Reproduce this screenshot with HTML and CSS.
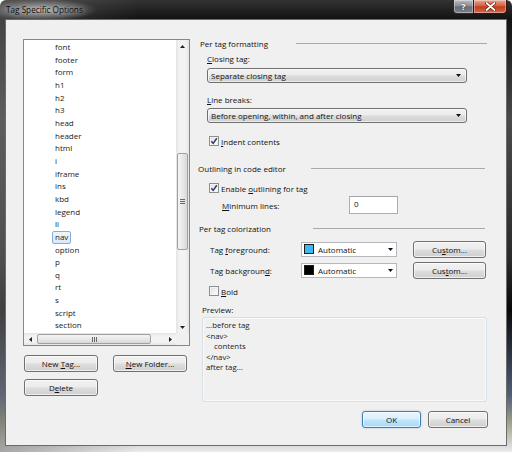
FILE: index.html
```html
<!DOCTYPE html>
<html>
<head>
<meta charset="utf-8">
<link rel="stylesheet" href="styles.css">
</head>
<body>
<div class="window">
  <div class="titlebar">
    <span class="title">Tag Specific Options</span>
    <div class="caps">
      <div class="cap cap-help"><span class="q">?</span></div>
      <div class="cap cap-close">
        <svg width="11" height="9" viewBox="0 0 11 9"><path d="M1.5 1 L9.5 8 M9.5 1 L1.5 8" stroke="#5a1a10" stroke-width="3.2" stroke-linecap="round"/><path d="M1.5 1 L9.5 8 M9.5 1 L1.5 8" stroke="#fff" stroke-width="1.8" stroke-linecap="round"/></svg>
      </div>
    </div>
  </div>
  <div class="client">
    <div class="left">
      <div class="listbox">
        <div class="list-main">
          <div class="items">
            <div class="item">font</div>
            <div class="item">footer</div>
            <div class="item">form</div>
            <div class="item">h1</div>
            <div class="item">h2</div>
            <div class="item">h3</div>
            <div class="item">head</div>
            <div class="item">header</div>
            <div class="item">html</div>
            <div class="item">i</div>
            <div class="item">iframe</div>
            <div class="item">ins</div>
            <div class="item">kbd</div>
            <div class="item">legend</div>
            <div class="item">li</div>
            <div class="item sel"><span>nav</span></div>
            <div class="item">option</div>
            <div class="item">p</div>
            <div class="item">q</div>
            <div class="item">rt</div>
            <div class="item">s</div>
            <div class="item">script</div>
            <div class="item">section</div>
          </div>
          <div class="vscroll">
            <div class="sb-arrow"><svg width="5" height="3" viewBox="0 0 5 3"><path d="M0 3 L2.5 0 L5 3 Z" fill="#222"/></svg></div>
            <div class="vs-before"></div>
            <div class="thumb-v"><svg width="5" height="5" viewBox="0 0 5 5"><path d="M0 0.5 H5 M0 2.5 H5 M0 4.5 H5" stroke="#6a6a6a" stroke-width="1"/></svg></div>
            <div class="vs-after"></div>
            <div class="sb-arrow"><svg width="5" height="3" viewBox="0 0 5 3"><path d="M0 0 L2.5 3 L5 0 Z" fill="#222"/></svg></div>
          </div>
        </div>
        <div class="hrow">
          <div class="hscroll">
            <div class="sb-arrow-h"><svg width="3" height="5" viewBox="0 0 3 5"><path d="M3 0 L0 2.5 L3 5 Z" fill="#222"/></svg></div>
            <div class="hs-before"></div>
            <div class="thumb-h"><svg width="5" height="5" viewBox="0 0 5 5"><path d="M0.5 0 V5 M2.5 0 V5 M4.5 0 V5" stroke="#6a6a6a" stroke-width="1"/></svg></div>
            <div class="hs-after"></div>
            <div class="sb-arrow-h"><svg width="3" height="5" viewBox="0 0 3 5"><path d="M0 0 L3 2.5 L0 5 Z" fill="#222"/></svg></div>
          </div>
          <div class="corner"></div>
        </div>
      </div>
      <div class="btn-row first">
        <div class="btn btn-left"><span>New <u>T</u>ag...</span></div>
        <div class="btn btn-left"><span><u>N</u>ew Folder...</span></div>
      </div>
      <div class="btn-row second">
        <div class="btn btn-left"><span>D<u>e</u>lete</span></div>
      </div>
    </div>

    <div class="right">
      <div class="sec sec1">
        <span class="sec-title">Per tag formatting</span>
        <span class="sec-line"></span>
      </div>
      <div class="lbl lbl-closing"><u>C</u>losing tag:</div>
      <div class="combo combo-first"><span>Separate closing tag</span><svg width="5" height="3" viewBox="0 0 5 3"><path d="M0 0 L2.5 3 L5 0 Z" fill="#111"/></svg></div>
      <div class="lbl lbl-lines"><u>L</u>ine breaks:</div>
      <div class="combo combo-second"><span>Before opening, within, and after closing</span><svg width="5" height="3" viewBox="0 0 5 3"><path d="M0 0 L2.5 3 L5 0 Z" fill="#111"/></svg></div>
      <div class="chk-row chk-indent">
        <span class="chk"><svg width="8" height="8" viewBox="0 0 8 8"><path d="M1.3 4.2 L3.2 6.4 L6.8 1.3" fill="none" stroke="#2f3b63" stroke-width="1.5"/></svg></span>
        <span class="chk-text"><u>I</u>ndent contents</span>
      </div>

      <div class="sec sec2">
        <span class="sec-title">Outlining in code editor</span>
        <span class="sec-line"></span>
      </div>
      <div class="chk-row chk-outline">
        <span class="chk"><svg width="8" height="8" viewBox="0 0 8 8"><path d="M1.3 4.2 L3.2 6.4 L6.8 1.3" fill="none" stroke="#2f3b63" stroke-width="1.5"/></svg></span>
        <span class="chk-text">Enable <u>o</u>utlining for tag</span>
      </div>
      <div class="min-row">
        <span class="min-label"><u>M</u>inimum lines:</span>
        <span class="textbox">0</span>
      </div>

      <div class="sec sec3">
        <span class="sec-title">Per tag colorization</span>
        <span class="sec-line"></span>
      </div>
      <div class="color-row fg-row">
        <span class="color-label">Tag <u>f</u>oreground:</span>
        <div class="color-combo"><span class="swatch swatch-blue"></span><span class="color-text">Automatic</span><svg width="5" height="3" viewBox="0 0 5 3"><path d="M0 0 L2.5 3 L5 0 Z" fill="#111"/></svg></div>
        <div class="btn btn-custom"><span>Cu<u>s</u>tom...</span></div>
      </div>
      <div class="color-row bg-row">
        <span class="color-label">Tag backgroun<u>d</u>:</span>
        <div class="color-combo"><span class="swatch swatch-black"></span><span class="color-text">Automatic</span><svg width="5" height="3" viewBox="0 0 5 3"><path d="M0 0 L2.5 3 L5 0 Z" fill="#111"/></svg></div>
        <div class="btn btn-custom"><span>Cus<u>t</u>om...</span></div>
      </div>
      <div class="chk-row chk-bold">
        <span class="chk"></span>
        <span class="chk-text"><u>B</u>old</span>
      </div>

      <div class="lbl lbl-preview">Preview:</div>
      <div class="preview">
        <div>...before tag</div>
        <div>&lt;nav&gt;</div>
        <div class="indent">contents</div>
        <div>&lt;/nav&gt;</div>
        <div>after tag...</div>
      </div>

      <div class="dlg-buttons">
        <div class="btn btn-ok"><span>OK</span></div>
        <div class="btn btn-cancel"><span>Cancel</span></div>
      </div>
    </div>
  </div>
</div>
</body>
</html>
```

FILE: styles.css
```css
html, body {
  margin: 0;
  padding: 0;
}

body {
  width: 512px;
  height: 452px;
  overflow: hidden;
  background: #ffffff;
  font-family: "Open Sans", "Noto Sans", sans-serif;
  font-size: 8px;
  color: #111111;
}

u {
  text-decoration-thickness: 1px;
  text-underline-offset: 1px;
}

.window {
  width: 512px;
  height: 452px;
  display: flex;
  flex-direction: column;
  box-sizing: border-box;
  border-radius: 6px 6px 0 0;
  background:
    radial-gradient(ellipse 55px 11px at 42px 10px, rgba(205, 205, 205, 0.8), rgba(205, 205, 205, 0) 100%),
    linear-gradient(to right, rgba(110, 110, 110, 0.55) 0, rgba(0, 0, 0, 0) 140px),
    linear-gradient(to bottom, #333333 0, #121212 19px, #4a4a4a 120px, #2a2a2a 260px, #090909 310px, #4e5d7a 395px, #a8a68e 425px, #d8d8d8 445px, #ececec 452px);
}

/* ---------- title bar ---------- */
.titlebar {
  height: 19px;
  flex: none;
  display: flex;
  align-items: flex-start;
}

.title {
  padding-left: 6px;
  line-height: 20px;
  font-size: 8.2px;
  color: #0a0a0a;
  text-shadow: 0 0 5px rgba(255, 255, 255, 0.7);
}

.caps {
  margin-left: auto;
  margin-right: 5px;
  display: flex;
  height: 14px;
}

.cap {
  box-sizing: border-box;
  height: 14px;
  display: flex;
  align-items: center;
  justify-content: center;
  border: 1px solid #2e2e2e;
  border-top: none;
  box-shadow: inset 0 0 0 1px rgba(255, 255, 255, 0.35);
}

.cap-help {
  width: 20px;
  border-right: none;
  border-radius: 0 0 0 4px;
  background: linear-gradient(#b9bcc2, #8c9098 45%, #6a6e76 52%, #7c8088 100%);
}

.q {
  color: #ffffff;
  font-weight: bold;
  font-size: 9px;
  line-height: 10px;
  text-shadow: 0 0 2px #222;
}

.cap-close {
  width: 34px;
  border-color: #3a140c;
  border-radius: 0 0 4px 0;
  background: linear-gradient(#e9a897, #d4613f 45%, #c23c1f 52%, #d26a4c 100%);
}

/* ---------- client area ---------- */
.client {
  flex: none;
  height: 427px;
  box-sizing: border-box;
  margin: 0 5px;
  border: 1px solid #6b6b6b;
  background: #f0f0f0;
  display: flex;
  padding: 17px 0 0 17px;
}

.left {
  width: 167px;
  margin-top: 2px;
  display: flex;
  flex-direction: column;
}

.listbox {
  box-sizing: border-box;
  width: 167px;
  height: 307px;
  border: 1px solid #828790;
  background: #ffffff;
  display: flex;
  flex-direction: column;
}

.list-main {
  flex: 1;
  display: flex;
  min-height: 0;
}

.items {
  flex: 1;
  overflow: hidden;
  padding-top: 1px;
  color: #1a1a1a;
}

.item {
  height: 12.67px;
  line-height: 12.67px;
  padding-left: 31px;
  white-space: nowrap;
}

.item.sel span {
  display: inline-block;
  box-sizing: border-box;
  height: 12.67px;
  line-height: 10.67px;
  vertical-align: top;
  margin-left: -3px;
  padding: 0 2px;
  border: 1px solid #84acdd;
  border-radius: 2px;
  background: linear-gradient(#eef5fd, #dbe9fa);
}

.vscroll {
  width: 13px;
  flex: none;
  display: flex;
  flex-direction: column;
  background: linear-gradient(to right, #e4e4e4, #f2f2f2 25%, #f2f2f2 75%, #e4e4e4);
}

.sb-arrow {
  height: 12px;
  flex: none;
  display: flex;
  align-items: center;
  justify-content: center;
}

.vs-before {
  height: 101px;
  flex: none;
}

.thumb-v {
  height: 97px;
  flex: none;
  box-sizing: border-box;
  margin: 0 1px;
  border: 1px solid #a0a0a0;
  border-radius: 2px;
  background: linear-gradient(to right, #f4f4f4, #e8e8e8 50%, #d8d8d8);
  display: flex;
  align-items: center;
  justify-content: center;
}

.vs-after {
  flex: 1;
}

.hrow {
  height: 12px;
  flex: none;
  display: flex;
}

.hscroll {
  flex: 1;
  display: flex;
  background: linear-gradient(#e4e4e4, #f2f2f2 25%, #f2f2f2 75%, #e4e4e4);
}

.sb-arrow-h {
  width: 12px;
  flex: none;
  display: flex;
  align-items: center;
  justify-content: center;
}

.hs-before {
  width: 1px;
  flex: none;
}

.thumb-h {
  width: 114px;
  flex: none;
  box-sizing: border-box;
  margin: 1px 0;
  border: 1px solid #a0a0a0;
  border-radius: 2px;
  background: linear-gradient(#f4f4f4, #e8e8e8 50%, #d8d8d8);
  display: flex;
  align-items: center;
  justify-content: center;
}

.hs-after {
  flex: 1;
}

.corner {
  width: 13px;
  flex: none;
  background: #f0f0f0;
}

/* ---------- buttons ---------- */
.btn {
  box-sizing: border-box;
  height: 17px;
  border: 1px solid #707070;
  border-radius: 3px;
  background: linear-gradient(#f2f2f2 0%, #ebebeb 48%, #dddddd 52%, #cfcfcf 100%);
  box-shadow: inset 0 0 0 1px rgba(255, 255, 255, 0.65);
  display: flex;
  align-items: center;
  justify-content: center;
  white-space: nowrap;
  color: #111111;
}

.btn-row {
  display: flex;
  gap: 15px;
  padding-left: 1px;
}

.btn-row.first {
  margin-top: 9px;
}

.btn-row.second {
  margin-top: 7px;
}

.btn-left {
  width: 74px;
}

.btn-ok {
  width: 59px;
  border-color: #3c7fb1;
  background: linear-gradient(#eaf6fd 0%, #d9f0fc 48%, #bee6fd 52%, #a7d9f5 100%);
  box-shadow: inset 0 0 0 1px rgba(255, 255, 255, 0.6), 0 0 2px rgba(60, 150, 220, 0.5);
}

.btn-cancel {
  width: 60px;
}

.btn-custom {
  width: 73px;
  margin-left: 16px;
}

/* ---------- right column ---------- */
.right {
  width: 290px;
  margin-left: 8px;
  display: flex;
  flex-direction: column;
}

.sec {
  height: 12px;
  display: flex;
  align-items: center;
}

.sec-title {
  flex: none;
  white-space: nowrap;
}

.sec-line {
  flex: none;
  height: 0;
  border-top: 1px solid #a9a9a9;
}

.sec1 {
  padding-left: 2px;
}

.sec1 .sec-title {
  width: 96px;
}

.sec1 .sec-line {
  width: 191px;
}

.sec2 {
  margin-top: 15px;
}

.sec2 .sec-title {
  width: 113px;
}

.sec2 .sec-line {
  width: 174px;
}

.sec3 {
  margin-top: 8px;
  padding-left: 1px;
}

.sec3 .sec-title {
  width: 114px;
}

.sec3 .sec-line {
  width: 172px;
}

.lbl {
  height: 12px;
  line-height: 12px;
  padding-left: 9px;
}

.lbl-closing {
  margin-top: 4px;
}

.lbl-lines {
  margin-top: 11px;
}

.lbl-preview {
  margin-top: 7px;
  padding-left: 4px;
}

.combo {
  box-sizing: border-box;
  width: 260px;
  height: 15px;
  margin-left: 9px;
  border: 1px solid #707070;
  border-radius: 3px;
  background: linear-gradient(#f2f2f2 0%, #ebebeb 48%, #dddddd 52%, #cfcfcf 100%);
  box-shadow: inset 0 0 0 1px rgba(255, 255, 255, 0.6);
  display: flex;
  align-items: center;
  justify-content: space-between;
  padding: 0 5px 0 3px;
  white-space: nowrap;
}

.combo-first {
  margin-top: 3px;
}

.combo-second {
  margin-top: 2px;
}

.chk-row {
  height: 12px;
  display: flex;
  align-items: center;
  padding-left: 11px;
}

.chk-indent {
  margin-top: 12px;
}

.chk-outline {
  margin-top: 8px;
}

.chk-bold {
  margin-top: 7px;
}

.chk {
  box-sizing: border-box;
  width: 10px;
  height: 10px;
  flex: none;
  border: 1px solid #8e8f8f;
  background: linear-gradient(135deg, #dcdcdc, #f6f6f6 70%, #ffffff);
  box-shadow: inset 0 0 0 1px #f4f4f4;
  display: flex;
  align-items: center;
  justify-content: center;
}

.chk-text {
  margin-left: 2px;
  white-space: nowrap;
}

.min-row {
  margin-top: 2px;
  height: 18px;
  display: flex;
  align-items: center;
  padding-left: 24px;
}

.min-label {
  width: 127px;
  flex: none;
}

.textbox {
  box-sizing: border-box;
  width: 49px;
  height: 18px;
  border: 1px solid #abadb3;
  border-top-color: #a3a5ab;
  background: #ffffff;
  padding: 1px 0 0 4px;
  line-height: 12px;
}

.color-row {
  height: 16px;
  display: flex;
  align-items: center;
  padding-left: 12px;
}

.fg-row {
  margin-top: 7px;
}

.bg-row {
  margin-top: 5px;
}

.color-label {
  width: 91px;
  flex: none;
  white-space: nowrap;
}

.color-combo {
  box-sizing: border-box;
  width: 96px;
  height: 15px;
  flex: none;
  border: 1px solid #b5b7bd;
  background: #ffffff;
  display: flex;
  align-items: center;
  padding: 0 3px 0 2px;
}

.swatch {
  box-sizing: border-box;
  width: 10px;
  height: 10px;
  flex: none;
  border: 1px solid #1a1a1a;
}

.swatch-blue {
  background: #3cbaf2;
}

.swatch-black {
  background: #000000;
}

.color-text {
  flex: 1;
  margin-left: 4px;
}

.preview {
  box-sizing: border-box;
  margin-top: 1px;
  margin-left: 4px;
  width: 285px;
  height: 85px;
  border: 1px solid #d5dfe5;
  border-radius: 3px;
  box-shadow: inset 0 0 0 1px #fafafa;
  padding: 2px 0 0 3px;
  font-size: 7.8px;
  line-height: 10.5px;
  color: #1a1a1a;
}

.preview .indent {
  padding-left: 8px;
}

.dlg-buttons {
  margin-top: 9px;
  display: flex;
  justify-content: flex-end;
  gap: 7px;
}
```
